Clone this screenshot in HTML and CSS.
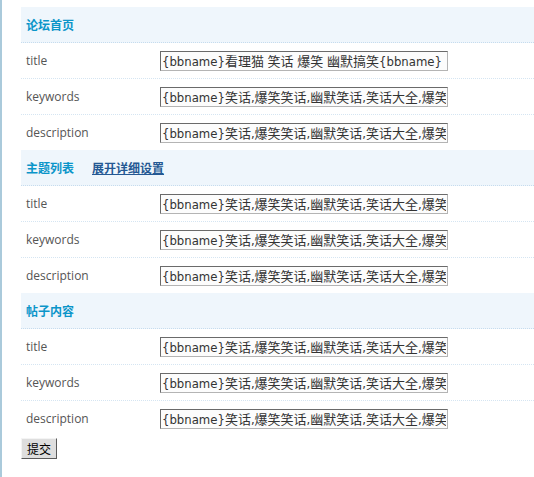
FILE: index.html
```html
<!DOCTYPE html>
<html lang="zh-CN">
<head>
<meta charset="utf-8">
<title>SEO设置</title>
<link rel="stylesheet" href="styles.css">
</head>
<body>
<form class="seo-form">
  <div class="section-head"><span class="section-title">论坛首页</span></div>
  <div class="row"><span class="label">title</span><input class="field" type="text" value="{bbname}看理猫 笑话 爆笑 幽默搞笑{bbname}"></div>
  <div class="row"><span class="label">keywords</span><input class="field" type="text" value="{bbname}笑话,爆笑笑话,幽默笑话,笑话大全,爆笑短信"></div>
  <div class="row row-last"><span class="label">description</span><input class="field" type="text" value="{bbname}笑话,爆笑笑话,幽默笑话,笑话大全,爆笑短信"></div>

  <div class="section-head"><span class="section-title">主题列表</span><a class="section-link" href="#">展开详细设置</a></div>
  <div class="row"><span class="label">title</span><input class="field" type="text" value="{bbname}笑话,爆笑笑话,幽默笑话,笑话大全,爆笑短信"></div>
  <div class="row"><span class="label">keywords</span><input class="field" type="text" value="{bbname}笑话,爆笑笑话,幽默笑话,笑话大全,爆笑短信"></div>
  <div class="row row-last"><span class="label">description</span><input class="field" type="text" value="{bbname}笑话,爆笑笑话,幽默笑话,笑话大全,爆笑短信"></div>

  <div class="section-head"><span class="section-title">帖子内容</span></div>
  <div class="row"><span class="label">title</span><input class="field" type="text" value="{bbname}笑话,爆笑笑话,幽默笑话,笑话大全,爆笑短信"></div>
  <div class="row"><span class="label">keywords</span><input class="field" type="text" value="{bbname}笑话,爆笑笑话,幽默笑话,笑话大全,爆笑短信"></div>
  <div class="row row-last"><span class="label">description</span><input class="field" type="text" value="{bbname}笑话,爆笑笑话,幽默笑话,笑话大全,爆笑短信"></div>

  <button class="submit" type="button">提交</button>
</form>
</body>
</html>
```

FILE: styles.css
```css
html, body {
  margin: 0;
  padding: 0;
}

body {
  min-height: 100vh;
  box-sizing: border-box;
  border-left: 2px solid #aacadb;
  padding: 7px 0 0 19px;
  background: #fff;
  font-family: "Open Sans", "Noto Sans CJK SC", sans-serif;
  font-size: 12px;
  color: #555;
  overflow: hidden;
}

.seo-form {
  display: flex;
  flex-direction: column;
  align-items: stretch;
}

.section-head {
  display: flex;
  align-items: center;
  height: 35px;
  padding: 0 5px;
  background: #eff6fc;
  border-bottom: 1px dotted #c6dcee;
}

.section-title {
  font-family: "Noto Sans CJK SC", sans-serif;
  font-weight: bold;
  font-size: 12px;
  color: #0b95c9;
}

.section-link {
  margin-left: 18px;
  font-family: "Noto Sans CJK SC", sans-serif;
  font-weight: bold;
  font-size: 12px;
  color: #245893;
  text-decoration: underline;
}

.row {
  display: grid;
  grid-template-columns: 134px 1fr;
  align-items: center;
  height: 35px;
  padding-left: 5px;
  border-bottom: 1px dotted #d5e5f2;
}

.row-last {
  border-bottom: none;
}

.label {
  color: #555;
  font-size: 12px;
}

.field {
  width: 288px;
  height: 20px;
  box-sizing: border-box;
  margin: 0;
  padding: 0 1px;
  border: 1px solid;
  border-color: #6a6a6a #b4b4b4 #b4b4b4 #6a6a6a;
  background: #fcfcfc;
  font-family: "DejaVu Sans Condensed", "DejaVu Sans", "Noto Sans CJK SC", sans-serif;
  font-stretch: condensed;
  font-size: 13px;
  color: #333;
  outline: none;
}

.submit {
  align-self: flex-start;
  margin-top: 2px;
  width: 36px;
  height: 21px;
  padding: 0;
  border: 1px solid;
  border-color: #f4f4f4 #5a5a5a #5a5a5a #f4f4f4;
  background: #dedede;
  font-family: "Noto Sans CJK SC", sans-serif;
  font-size: 12px;
  color: #000;
}
```
